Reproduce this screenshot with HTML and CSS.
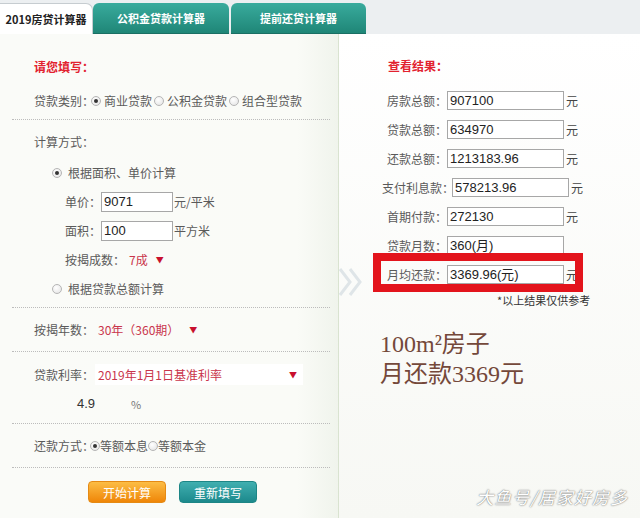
FILE: index.html
```html
<!DOCTYPE html>
<html lang="zh-CN">
<head>
<meta charset="utf-8">
<title>房贷计算器</title>
<link rel="stylesheet" href="styles.css">
</head>
<body>
<div class="page">
  <div class="tabs">
    <div class="tab tab-active">2019房贷计算器</div>
    <div class="tab tab-teal tab-1">公积金贷款计算器</div>
    <div class="tab tab-teal tab-2">提前还贷计算器</div>
  </div>
  <div class="main">
    <div class="form-panel">
      <div class="sec sec-first">
        <div class="heading">请您填写：</div>
        <div class="row row-first">
          <span class="lbl lbl-radio">贷款类别：</span>
          <span class="radio on"></span><span class="opt">商业贷款</span>
          <span class="radio"></span><span class="opt">公积金贷款</span>
          <span class="radio"></span><span class="opt">组合型贷款</span>
        </div>
      </div>
      <div class="sec sec-method">
        <div class="row"><span class="lbl">计算方式：</span></div>
        <div class="row row-choice row-choice-first"><span class="radio on"></span><span>根据面积、单价计算</span></div>
        <div class="row row-sub"><span class="lbl-s">单价：</span><span class="field">9071</span><span class="unit">元/平米</span></div>
        <div class="row row-sub"><span class="lbl-s">面积：</span><span class="field">100</span><span class="unit">平方米</span></div>
        <div class="row row-sub"><span class="lbl-s">按揭成数：</span><span class="val">7成</span><span class="caret caret-short">▼</span></div>
        <div class="row row-choice"><span class="radio"></span><span>根据贷款总额计算</span></div>
      </div>
      <div class="sec sec-years">
        <div class="row"><span class="lbl">按揭年数：</span><span class="val">30年（360期）</span><span class="caret caret-years">▼</span></div>
      </div>
      <div class="sec sec-rate">
        <div class="row"><span class="lbl">贷款利率：</span><span class="select-wide"><span class="val-plain">2019年1月1日基准利率</span><span class="caret">▼</span></span></div>
        <div class="row"><span class="rate">4.9</span><span class="pct">%</span></div>
      </div>
      <div class="sec sec-pay">
        <div class="row row-pay">
          <span class="lbl lbl-radio-tight">还款方式：</span>
          <span class="radio on"></span><span>等额本息</span>
          <span class="radio"></span><span>等额本金</span>
        </div>
      </div>
      <div class="btn-row">
        <span class="btn btn-orange">开始计算</span>
        <span class="btn btn-teal">重新填写</span>
      </div>
    </div>
    <div class="result-panel">
      <div class="heading heading-res">查看结果：</div>
      <div class="res-list">
        <div class="res-row"><span class="res-lbl">房款总额：</span><span class="res-field">907100</span><span class="res-unit">元</span></div>
        <div class="res-row"><span class="res-lbl">贷款总额：</span><span class="res-field">634970</span><span class="res-unit">元</span></div>
        <div class="res-row"><span class="res-lbl">还款总额：</span><span class="res-field">1213183.96</span><span class="res-unit">元</span></div>
        <div class="res-row res-row-wide"><span class="res-lbl">支付利息款：</span><span class="res-field">578213.96</span><span class="res-unit">元</span></div>
        <div class="res-row"><span class="res-lbl">首期付款：</span><span class="res-field">272130</span><span class="res-unit">元</span></div>
        <div class="res-row"><span class="res-lbl">贷款月数：</span><span class="res-field">360(月)</span></div>
        <div class="res-row res-row-hl"><span class="hl-frame"></span><span class="res-lbl">月均还款：</span><span class="res-field">3369.96(元)</span><span class="res-unit">元</span></div>
      </div>
      <div class="note">*以上结果仅供参考</div>
      <div class="big">
        <div>100m²房子</div>
        <div>月还款3369元</div>
      </div>
    </div>
  </div>
  <svg class="chevrons" width="26" height="30" viewBox="0 0 26 30">
    <polyline points="2,2 12,15 2,28" fill="none" stroke="#dfe5e8" stroke-width="3"/>
    <polyline points="12,2 22,15 12,28" fill="none" stroke="#dfe5e8" stroke-width="3"/>
  </svg>
  <div class="watermark">大鱼号/居家好房多</div>
</div>
</body>
</html>
```
FILE: styles.css
```css
* { box-sizing: border-box; }

body {
  margin: 0;
  width: 640px;
  height: 518px;
  overflow: hidden;
  font-family: "Noto Sans CJK SC", "Liberation Sans", sans-serif;
  font-size: 12px;
  color: #5a5a5a;
  background: #fff;
}

.page {
  position: relative;
  width: 640px;
  height: 518px;
}

/* Tabs */
.tabs {
  display: flex;
  height: 34px;
  padding-top: 3px;
  background: #eceff1;
}

.tab {
  height: 31px;
  display: flex;
  align-items: center;
  justify-content: center;
  font-size: 11px;
  font-weight: bold;
  border-radius: 6px 6px 0 0;
  white-space: nowrap;
}

.tab-active {
  width: 93px;
  background: #fff;
  color: #222;
  border: 1px solid #c6ccd0;
  border-left: none;
  border-bottom: none;
  border-radius: 0 7px 0 0;
}

.tab-teal {
  color: #fff;
  background: linear-gradient(#39ab9d, #1f8677);
  border-bottom: 1px solid #1a6f64;
}

.tab-1 { width: 136px; }
.tab-2 { width: 135px; margin-left: 2px; }

/* Main */
.main {
  display: flex;
  height: 484px;
}

.form-panel {
  width: 339px;
  border-right: 1px solid #d9e3d0;
  background: linear-gradient(to right, #fafbf8 0%, #fafbf7 88%, #f0f4ec 100%);
}

.result-panel {
  flex: 1;
  background: linear-gradient(#ffffff, #f7f8f4);
}

.sec {
  margin: 0 8px 0 12px;
  padding-left: 22px;
  border-bottom: 1px dotted #bcbcbc;
}

.sec-first { padding-top: 25px; padding-bottom: 4px; }
.sec-method { padding-top: 7px; padding-bottom: 4px; }
.sec-years { padding-top: 7px; padding-bottom: 7px; }
.sec-rate { padding-top: 8px; padding-bottom: 5px; }
.sec-pay { padding-top: 7px; padding-bottom: 7px; }

.heading {
  height: 16px;
  line-height: 16px;
  color: #e2222f;
  font-weight: bold;
  font-size: 12px;
}

.row {
  display: flex;
  align-items: center;
  height: 29px;
  white-space: nowrap;
}

.row-first { margin-top: 11px; }

.lbl { width: 60px; flex: none; }
.lbl-radio { margin-right: -3px; }
.lbl-radio-tight { margin-right: -4px; }

.radio {
  flex: none;
  width: 10px;
  height: 10px;
  border-radius: 50%;
  border: 1px solid #b5b5b5;
  background: radial-gradient(circle at 40% 35%, #ffffff, #e2e2e2);
  margin-right: 3px;
  position: relative;
}

.radio.on::after {
  content: "";
  position: absolute;
  left: 2px;
  top: 2px;
  width: 4px;
  height: 4px;
  border-radius: 50%;
  background: #333;
}

.opt { margin-right: 2px; }

.row-pay .radio { margin-right: 0; }

.row-choice { margin-left: 18px; }
.row-choice .radio { margin-right: 6px; }
.row-choice-first { margin-top: 2px; }

.row-sub { padding-left: 31px; }

.lbl-s { flex: none; }

.field {
  width: 72px;
  height: 20px;
  border: 1px solid #a7a7a7;
  background: #fff;
  font-family: "Liberation Sans", sans-serif;
  font-size: 13px;
  line-height: 18px;
  color: #222;
  padding-left: 2px;
}

.unit { margin-left: 1px; }

.val {
  margin-left: 4px;
  color: #c9354b;
}

.val-plain { color: #c9354b; }

.caret {
  font-size: 8px;
  color: #c8102e;
}

.caret-short { margin-left: 8px; }
.caret-years { margin-left: 10px; }

.select-wide {
  width: 208px;
  height: 21px;
  background: #fff;
  display: flex;
  align-items: center;
  justify-content: space-between;
  padding: 0 6px 0 3px;
  margin-left: 1px;
}

.rate {
  margin-left: 43px;
  width: 50px;
  font-family: "Liberation Sans", sans-serif;
  font-size: 13px;
  color: #333;
}

.pct {
  margin-left: 4px;
  color: #777;
  font-size: 11px;
}

.btn-row {
  display: flex;
  gap: 13px;
  padding: 13px 0 0 88px;
}

.btn {
  width: 78px;
  height: 22px;
  border-radius: 4px;
  color: #fff;
  font-size: 12px;
  display: flex;
  align-items: center;
  justify-content: center;
}

.btn-orange {
  background: linear-gradient(#fcbd45, #ef8608);
  border: 1px solid #e58a14;
}

.btn-teal {
  background: linear-gradient(#40afb0, #1c898c);
  border: 1px solid #1d8686;
}

/* Results */
.heading-res {
  margin: 24px 0 0 49px;
}

.res-list {
  margin: 12px 0 0 38px;
}

.res-row {
  display: flex;
  align-items: center;
  height: 29px;
  white-space: nowrap;
}

.res-row-wide { margin-left: 5px; }

.res-row-hl { position: relative; }

.hl-frame {
  position: absolute;
  left: -4px;
  top: -7px;
  width: 210px;
  height: 39px;
  border: 8px solid #e3141c;
}

.res-lbl {
  width: 70px;
  flex: none;
  text-align: right;
}

.res-field {
  width: 117px;
  height: 19px;
  border: 1px solid #a7a7a7;
  background: #fff;
  font-family: "Liberation Sans", sans-serif;
  font-size: 13px;
  line-height: 17px;
  color: #222;
  padding-left: 2px;
}

.res-unit {
  margin-left: 2px;
  color: #444;
}

.note {
  margin: 4px 0 0 158px;
  font-size: 11px;
  line-height: 14px;
  color: #333;
}

.big {
  margin: 22px 0 0 41px;
  font-family: "Liberation Serif", "Noto Sans CJK SC", serif;
  font-size: 24px;
  line-height: 30px;
  color: #74483a;
}

.chevrons {
  position: absolute;
  left: 338px;
  top: 267px;
}

.watermark {
  position: absolute;
  right: 12px;
  top: 485px;
  font-size: 17px;
  line-height: 24px;
  letter-spacing: 1px;
  font-style: italic;
  color: #fff;
  text-shadow: 0 0 2px rgba(0, 0, 0, 0.45), 0 0 1px rgba(0, 0, 0, 0.4);
  white-space: nowrap;
}
```
